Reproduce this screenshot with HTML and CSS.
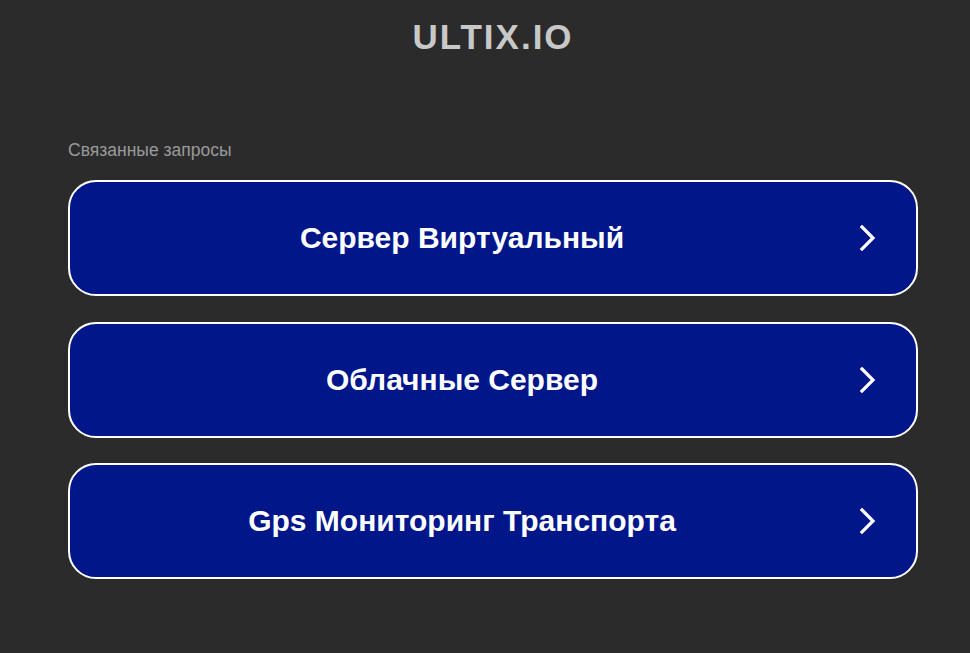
FILE: index.html
```html
<!DOCTYPE html>
<html lang="ru">
<head>
<meta charset="utf-8">
<title>ULTIX.IO</title>
<link rel="stylesheet" href="styles.css">
</head>
<body>
<div class="page">
  <header class="header">ULTIX.IO</header>
  <main class="content">
    <div class="label">Связанные запросы</div>
    <div class="list">
      <a class="item" href="#"><span class="item-text">Сервер Виртуальный</span><svg class="chev" viewBox="0 0 20 28" width="20" height="28"><path d="M4 3 L15 14 L4 25" fill="none" stroke="#fff" stroke-width="3.2" stroke-linecap="square"/></svg></a>
      <a class="item" href="#"><span class="item-text">Облачные Сервер</span><svg class="chev" viewBox="0 0 20 28" width="20" height="28"><path d="M4 3 L15 14 L4 25" fill="none" stroke="#fff" stroke-width="3.2" stroke-linecap="square"/></svg></a>
      <a class="item" href="#"><span class="item-text">Gps Мониторинг Транспорта</span><svg class="chev" viewBox="0 0 20 28" width="20" height="28"><path d="M4 3 L15 14 L4 25" fill="none" stroke="#fff" stroke-width="3.2" stroke-linecap="square"/></svg></a>
    </div>
  </main>
</div>
</body>
</html>
```
FILE: styles.css
```css
html, body {
  margin: 0;
  padding: 0;
  background: #2b2b2b;
  font-family: "Liberation Sans", Arial, sans-serif;
}
.page {
  width: 970px;
  height: 653px;
  box-sizing: border-box;
  padding: 0 52px 0 68px;
}
.header {
  text-align: center;
  color: #c8c8c8;
  font-weight: bold;
  font-size: 35px;
  letter-spacing: 2px;
  padding-top: 17px;
  line-height: 40px;
}
.content {
  padding-top: 83px;
}
.label {
  color: #9a9a9a;
  font-size: 17.5px;
  line-height: 20px;
  margin-bottom: 20px;
}
.list {
  display: flex;
  flex-direction: column;
  gap: 25.5px;
}
.item {
  display: flex;
  align-items: center;
  height: 116px;
  box-sizing: border-box;
  border: 2px solid #fff;
  border-radius: 28px;
  background: #001689;
  text-decoration: none;
  color: #fff;
  padding: 0 38px 0 0;
}
.item-text {
  flex: 1;
  text-align: center;
  font-weight: bold;
  font-size: 30px;
  margin-right: 4px;
}
.chev {
  display: block;
  flex: none;
}
```
